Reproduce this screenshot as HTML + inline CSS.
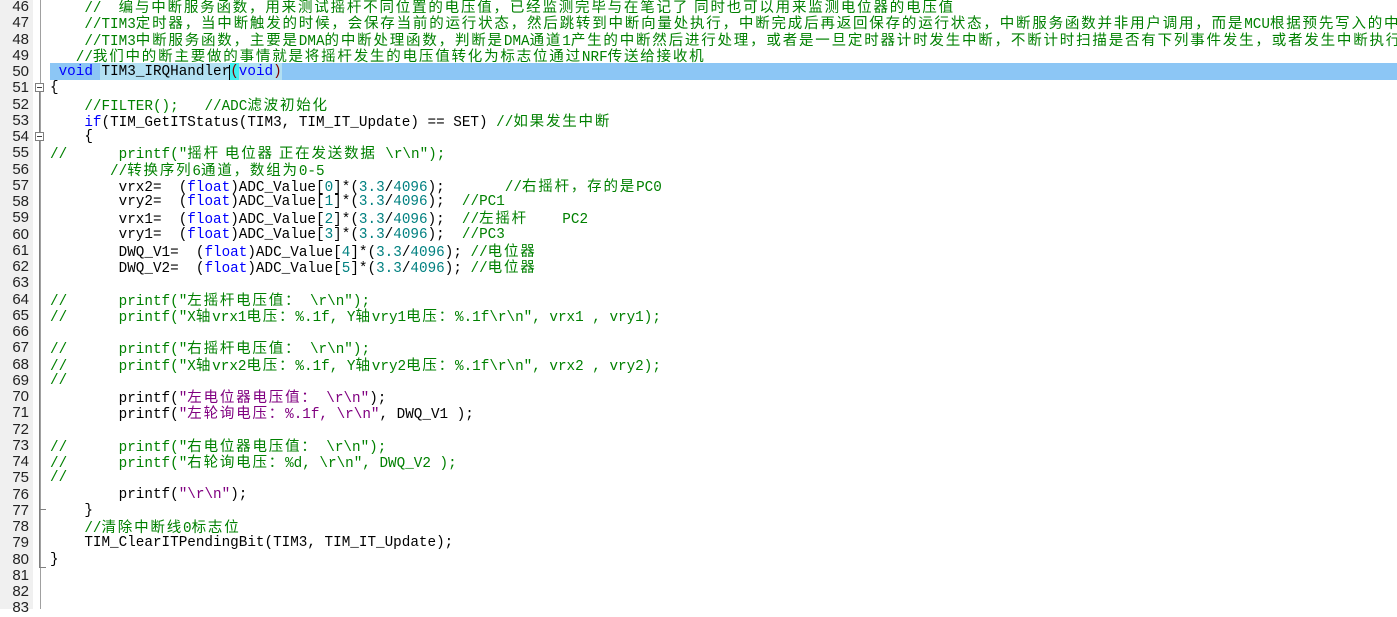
<!DOCTYPE html>
<html><head><meta charset="utf-8"><style>
html,body{margin:0;padding:0;width:1397px;height:609px;overflow:hidden;background:#fff;}
#g{position:absolute;left:0;top:0;width:33px;height:609px;background:#f0f0f0;}
#vl{position:absolute;left:40px;top:0;width:1px;height:609px;background:#a0a0a0;}
.num{position:absolute;left:0;width:29px;text-align:right;font:15px "Liberation Sans",sans-serif;color:#222;height:16.25px;line-height:16.25px;}
#code{position:absolute;left:50px;top:-1px;width:1347px;font-family:"Liberation Mono","Noto Sans CJK SC",monospace;font-size:14.3px;line-height:16.25px;color:#000;}
.l{height:16.25px;position:relative;white-space:pre;overflow:hidden;}
.c{font-family:"Noto Sans CJK SC",sans-serif;font-size:14.5px;letter-spacing:1.8px;line-height:16px;}
.m{color:#008000}.k{color:#0000ff}.n{color:#008080}.s{color:#800080}.p{color:#800000}
.fold{position:absolute;left:35px;width:9px;height:9px;border:1px solid #808080;background:#fff;box-sizing:border-box;}
.fold:after{content:"";position:absolute;left:1px;top:3px;width:5px;height:1px;background:#404040;}
</style></head><body>
<div id="g"></div>
<div id="vl"></div>
<div style="position:absolute;left:50px;top:63px;width:1347px;height:17px;background:#8cc6f5"></div>
<div style="position:absolute;left:100px;top:63px;width:182px;height:17px;background:#b2e0f2"></div>
<div style="position:absolute;left:230px;top:63px;width:9px;height:17px;background:#40f0f0"></div>
<div style="position:absolute;left:39px;top:90px;width:1px;height:478px;background:#808080"></div>
<div style="position:absolute;left:40px;top:509px;width:6px;height:1px;background:#808080"></div>
<div style="position:absolute;left:40px;top:567px;width:6px;height:1px;background:#808080"></div>
<div class="fold" style="top:83px"></div>
<div class="fold" style="top:132px"></div>
<div id="code"><div class="l m">    //  <span class="c">编与中断服务函数，用来测试摇杆不同位置的电压值，已经监测完毕与在笔记了 同时也可以用来监测电位器的电压值</span></div><div class="l m">    //TIM3<span class="c">定时器，当中断触发的时候，会保存当前的运行状态，然后跳转到中断向量处执行，中断完成后再返回保存的运行状态，中断服务函数并非用户调用，而是</span>MCU<span class="c">根据预先写入的中断</span></div><div class="l m">    //TIM3<span class="c">中断服务函数，主要是</span>DMA<span class="c">的中断处理函数，判断是</span>DMA<span class="c">通道</span>1<span class="c">产生的中断然后进行处理，或者是一旦定时器计时发生中断，不断计时扫描是否有下列事件发生，或者发生中断执行</span></div><div class="l m">   //<span class="c">我们中的断主要做的事情就是将摇杆发生的电压值转化为标志位通过</span>NRF<span class="c">传送给接收机</span></div><div class="l"> <span class="k">void</span> TIM3_IRQHandler<span class="p">(</span><span class="k">void</span><span class="p">)</span><span style="position:absolute;left:179px;top:1px;width:1px;height:15px;background:#000"></span></div><div class="l">{</div><div class="l">    <span class="m">//FILTER();   //ADC<span class="c">滤波初始化</span></span></div><div class="l">    <span class="k">if</span>(TIM_GetITStatus(TIM3, TIM_IT_Update) == SET) <span class="m">//<span class="c">如果发生中断</span></span></div><div class="l">    {</div><div class="l m">//      printf("<span class="c">摇杆 电位器 正在发送数据</span> \r\n");</div><div class="l m">       //<span class="c">转换序列</span>6<span class="c">通道，数组为</span>0-5</div><div class="l">        vrx2=  (<span class="k">float</span>)ADC_Value[<span class="n">0</span>]*(<span class="n">3.3</span>/<span class="n">4096</span>);       <span class="m">//<span class="c">右摇杆，存的是</span>PC0</span></div><div class="l">        vry2=  (<span class="k">float</span>)ADC_Value[<span class="n">1</span>]*(<span class="n">3.3</span>/<span class="n">4096</span>);  <span class="m">//PC1</span></div><div class="l">        vrx1=  (<span class="k">float</span>)ADC_Value[<span class="n">2</span>]*(<span class="n">3.3</span>/<span class="n">4096</span>);  <span class="m">//<span class="c">左摇杆</span>    PC2</span></div><div class="l">        vry1=  (<span class="k">float</span>)ADC_Value[<span class="n">3</span>]*(<span class="n">3.3</span>/<span class="n">4096</span>);  <span class="m">//PC3</span></div><div class="l">        DWQ_V1=  (<span class="k">float</span>)ADC_Value[<span class="n">4</span>]*(<span class="n">3.3</span>/<span class="n">4096</span>); <span class="m">//<span class="c">电位器</span></span></div><div class="l">        DWQ_V2=  (<span class="k">float</span>)ADC_Value[<span class="n">5</span>]*(<span class="n">3.3</span>/<span class="n">4096</span>); <span class="m">//<span class="c">电位器</span></span></div><div class="l"> </div><div class="l m">//      printf("<span class="c">左摇杆电压值：</span> \r\n");</div><div class="l m">//      printf("X<span class="c">轴</span>vrx1<span class="c">电压：</span>%.1f, Y<span class="c">轴</span>vry1<span class="c">电压：</span>%.1f\r\n", vrx1 , vry1);</div><div class="l"> </div><div class="l m">//      printf("<span class="c">右摇杆电压值：</span> \r\n");</div><div class="l m">//      printf("X<span class="c">轴</span>vrx2<span class="c">电压：</span>%.1f, Y<span class="c">轴</span>vry2<span class="c">电压：</span>%.1f\r\n", vrx2 , vry2);</div><div class="l m">//</div><div class="l">        printf(<span class="s">"<span class="c">左电位器电压值：</span> \r\n"</span>);</div><div class="l">        printf(<span class="s">"<span class="c">左轮询电压：</span>%.1f, \r\n"</span>, DWQ_V1 );</div><div class="l"> </div><div class="l m">//      printf("<span class="c">右电位器电压值：</span> \r\n");</div><div class="l m">//      printf("<span class="c">右轮询电压：</span>%d, \r\n", DWQ_V2 );</div><div class="l m">//</div><div class="l">        printf(<span class="s">"\r\n"</span>);</div><div class="l">    }</div><div class="l">    <span class="m">//<span class="c">清除中断线</span>0<span class="c">标志位</span></span></div><div class="l">    TIM_ClearITPendingBit(TIM3, TIM_IT_Update);</div><div class="l">}</div></div>
<div class="num" style="top:-1px">46</div><div class="num" style="top:15.25px">47</div><div class="num" style="top:31.5px">48</div><div class="num" style="top:47.75px">49</div><div class="num" style="top:64px">50</div><div class="num" style="top:80.25px">51</div><div class="num" style="top:96.5px">52</div><div class="num" style="top:112.75px">53</div><div class="num" style="top:129px">54</div><div class="num" style="top:145.25px">55</div><div class="num" style="top:161.5px">56</div><div class="num" style="top:177.75px">57</div><div class="num" style="top:194px">58</div><div class="num" style="top:210.25px">59</div><div class="num" style="top:226.5px">60</div><div class="num" style="top:242.75px">61</div><div class="num" style="top:259px">62</div><div class="num" style="top:275.25px">63</div><div class="num" style="top:291.5px">64</div><div class="num" style="top:307.75px">65</div><div class="num" style="top:324px">66</div><div class="num" style="top:340.25px">67</div><div class="num" style="top:356.5px">68</div><div class="num" style="top:372.75px">69</div><div class="num" style="top:389px">70</div><div class="num" style="top:405.25px">71</div><div class="num" style="top:421.5px">72</div><div class="num" style="top:437.75px">73</div><div class="num" style="top:454px">74</div><div class="num" style="top:470.25px">75</div><div class="num" style="top:486.5px">76</div><div class="num" style="top:502.75px">77</div><div class="num" style="top:519px">78</div><div class="num" style="top:535.25px">79</div><div class="num" style="top:551.5px">80</div><div class="num" style="top:567.75px">81</div><div class="num" style="top:584px">82</div><div class="num" style="top:600.25px">83</div>
</body></html>
